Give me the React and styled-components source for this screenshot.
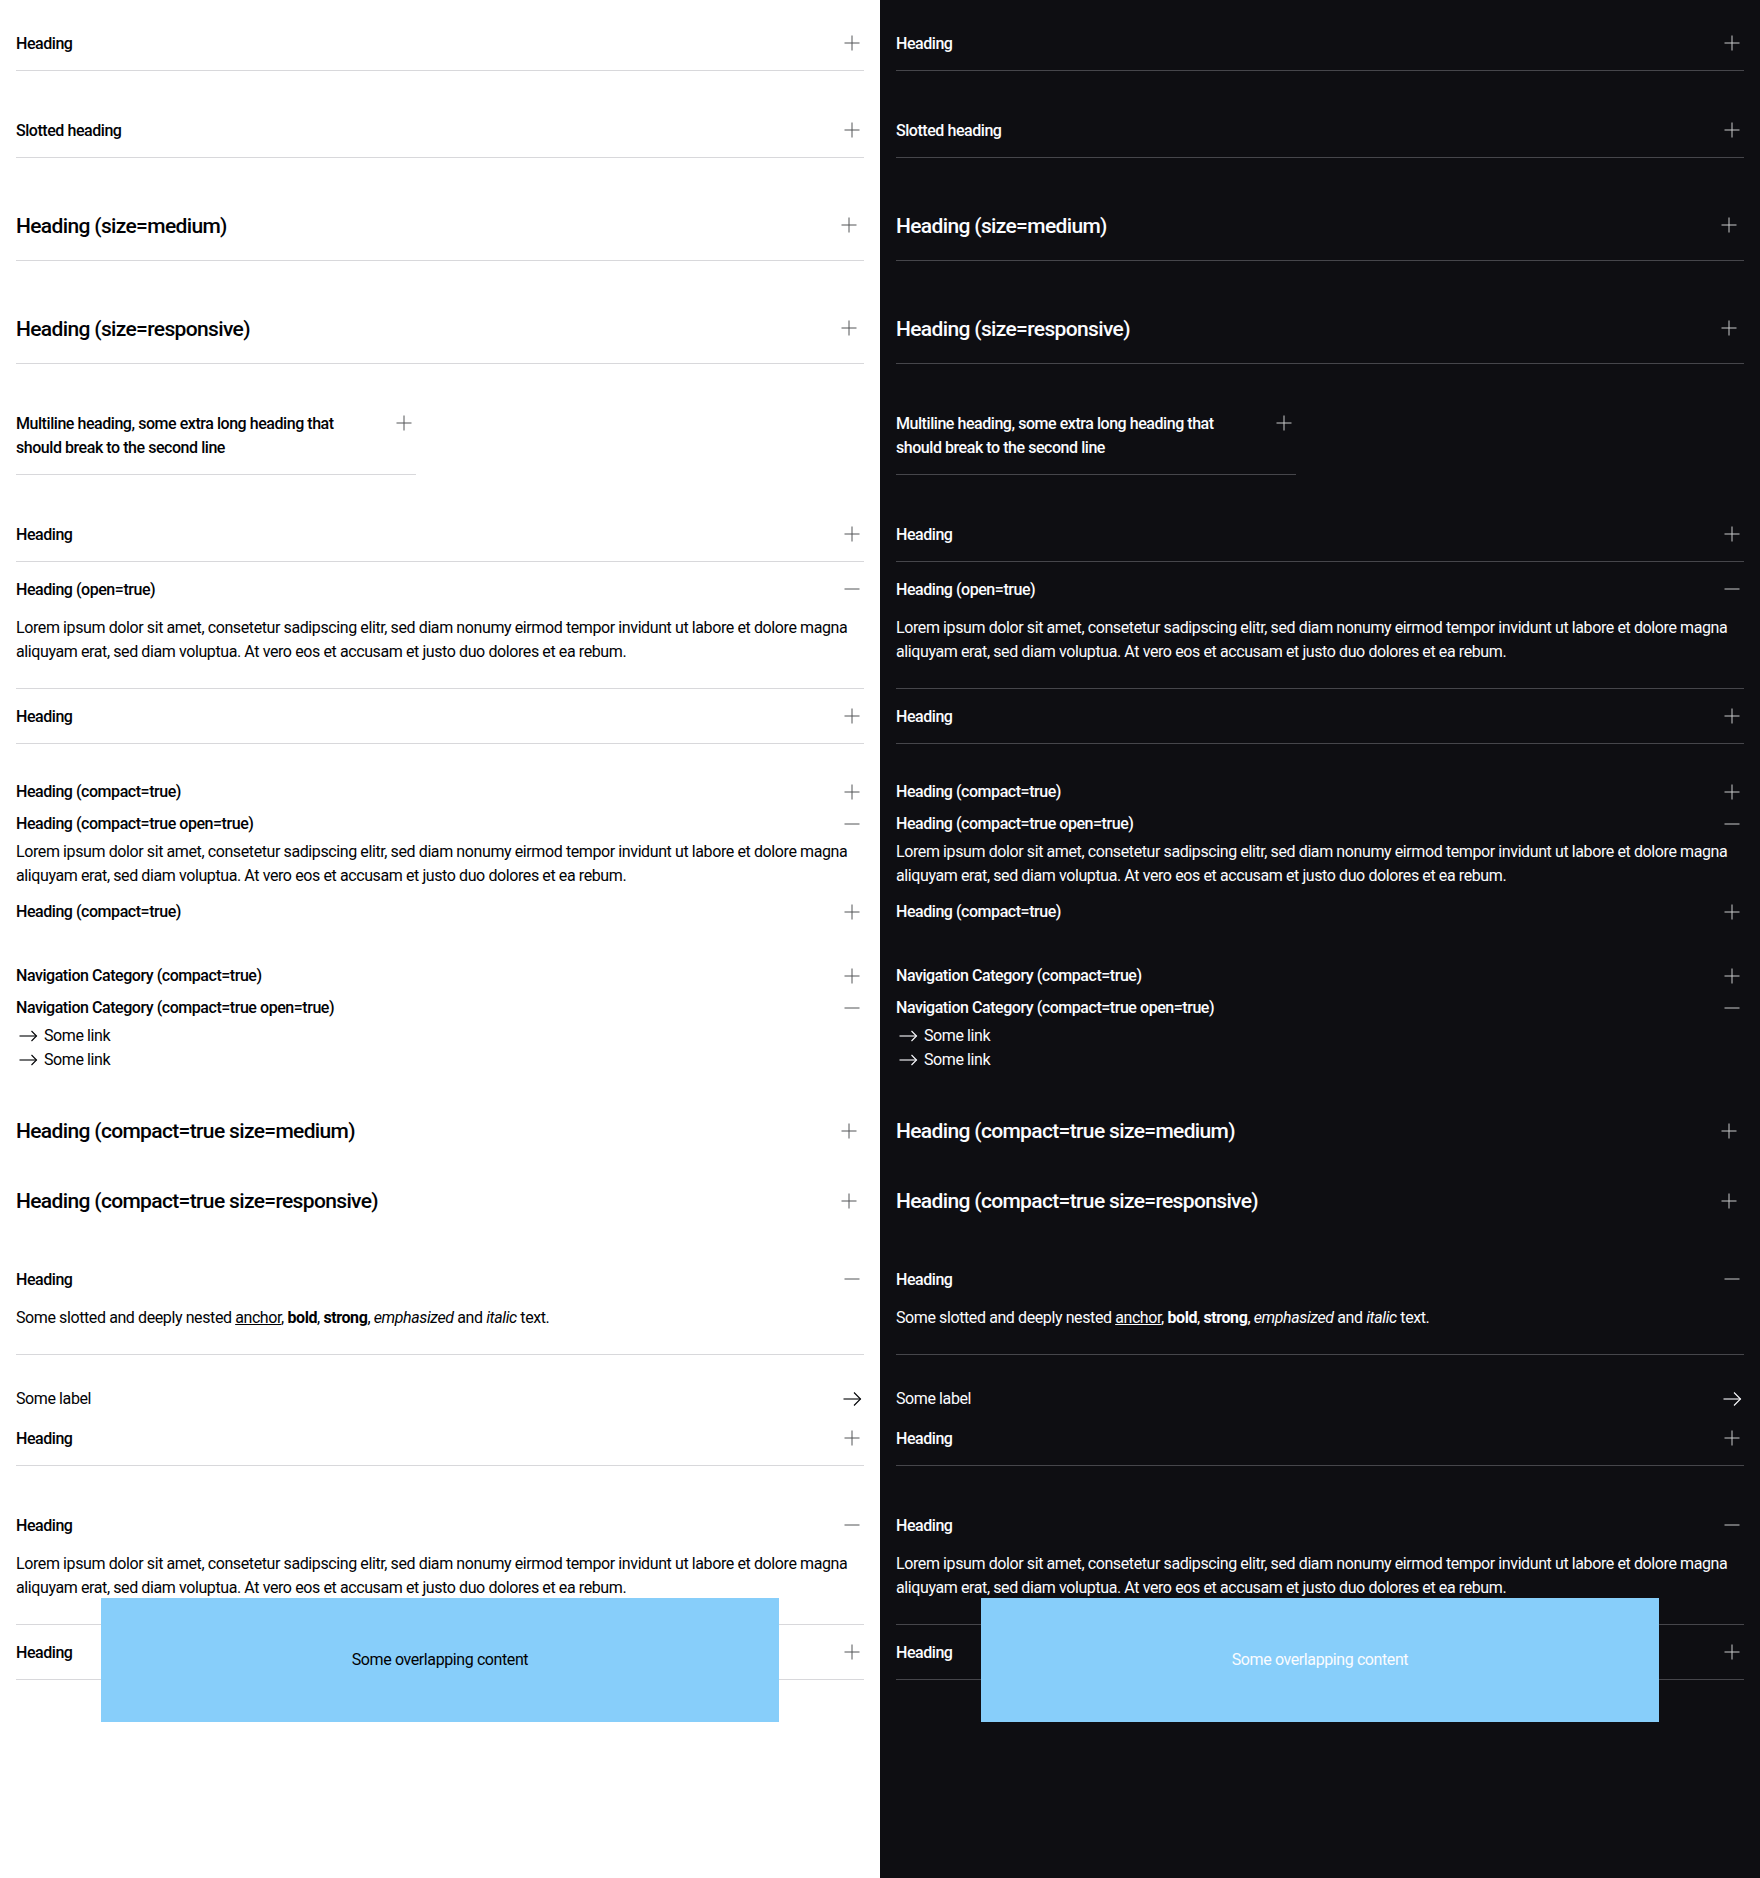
import React from "react";
import styled, { createGlobalStyle, ThemeProvider } from "styled-components";

const light = {
  bg: "#ffffff",
  text: "#010205",
  divider: "#d8d8db",
  icon: "#535457",
  overlayText: "#010205",
};
const dark = {
  bg: "#0e0e12",
  text: "#fbfcff",
  divider: "#46464b",
  icon: "#c9cacb",
  overlayText: "#fbfcff",
};

const Global = createGlobalStyle`
  html, body { margin: 0; padding: 0; }
  body { font-family: Roboto, "Liberation Sans", Arial, sans-serif; -webkit-font-smoothing: antialiased; }
  * { box-sizing: border-box; }
`;

const Page = styled.div`
  display: grid;
  grid-template-columns: 1fr 1fr;
  min-height: 100vh;
`;

const Panel = styled.div`
  background: ${(p) => p.theme.bg};
  color: ${(p) => p.theme.text};
  padding: 16px;
  display: flex;
  flex-direction: column;
  gap: 32px;
`;

const Group = styled.div`
  position: relative;
  display: flex;
  flex-direction: column;
`;

const Item = styled.div`
  max-width: ${(p) => p.$maxWidth || "none"};
  border-bottom: ${(p) => (p.$compact ? "none" : `1px solid ${p.theme.divider}`)};
`;

const Header = styled.div`
  display: flex;
  justify-content: space-between;
  align-items: flex-start;
  gap: 24px;
  padding: ${(p) => (p.$compact ? "4px 0 4px" : p.$size === "medium" ? "21px 0 19px" : "16px 0 14px")};
`;

const Title = styled.span`
  font-size: ${(p) => (p.$size === "medium" ? 21 : 16)}px;
  line-height: ${(p) => (p.$size === "medium" ? 30 : 24)}px;
  font-weight: 500;
  letter-spacing: ${(p) => (p.$size === "medium" ? "-0.65px" : "-0.45px")};
`;

const IconBox = styled.span`
  flex: none;
  display: flex;
  align-items: center;
  justify-content: center;
  width: ${(p) => p.$box}px;
  height: ${(p) => p.$box}px;
  margin-top: ${(p) => (p.$lift ? "-1px" : "0")};
  color: ${(p) => (p.$strong ? p.theme.text : p.theme.icon)};
`;

const Content = styled.div`
  padding: 0 0 ${(p) => (p.$compact ? 8 : 24)}px;
  font-size: 16px;
  line-height: 24px;
  letter-spacing: -0.4px;

  b, strong { font-weight: 700; }
`;

const InlineAnchor = styled.a`
  color: inherit;
  text-decoration: underline;
`;

const LinkList = styled.div`
  display: flex;
  flex-direction: column;
`;

const LinkRow = styled.a`
  display: flex;
  align-items: center;
  gap: 4px;
  color: inherit;
  text-decoration: none;
  font-size: 16px;
  line-height: 24px;
  letter-spacing: -0.4px;
`;

const LabelRow = styled.a`
  display: flex;
  justify-content: space-between;
  align-items: center;
  color: inherit;
  text-decoration: none;
  font-size: 16px;
  line-height: 24px;
  letter-spacing: -0.4px;
`;

const Overlay = styled.div`
  position: absolute;
  top: 100px;
  left: 10%;
  width: 80%;
  height: 124px;
  background: #87cefa;
  color: ${(p) => p.theme.overlayText};
  display: flex;
  align-items: center;
  justify-content: center;
  font-size: 16px;
  line-height: 24px;
  letter-spacing: -0.4px;
`;

const Plus = ({ open }) => (
  <svg width="24" height="24" viewBox="0 0 24 24" fill="none" stroke="currentColor" strokeWidth="1">
    <path d="M4.5 12h15" />
    {!open && <path d="M12 4.5v15" />}
  </svg>
);

const Arrow = ({ tall }) => (
  <svg width="24" height="24" viewBox="0 0 24 24" fill="none" stroke="currentColor" strokeWidth="1.1">
    <path d="M3.5 12h17" />
    {tall ? <path d="M14 5.5l6.5 6.5-6.5 6.5" /> : <path d="M15.5 7l5 5-5 5" />}
  </svg>
);

const Accordion = ({ heading, size = "small", compact, open, maxWidth, children }) => (
  <Item $compact={compact} $maxWidth={maxWidth}>
    <Header $compact={compact} $size={size}>
      <Title $size={size}>{heading}</Title>
      <IconBox $box={size === "medium" ? 30 : 24} $lift={!compact}>
        <Plus open={open} />
      </IconBox>
    </Header>
    {open && <Content $compact={compact}>{children}</Content>}
  </Item>
);

const LOREM =
  "Lorem ipsum dolor sit amet, consetetur sadipscing elitr, sed diam nonumy eirmod tempor invidunt ut labore et dolore magna aliquyam erat, sed diam voluptua. At vero eos et accusam et justo duo dolores et ea rebum.";

const Showcase = () => (
  <Panel>
    <Group>
      <Accordion heading="Heading" />
    </Group>
    <Group>
      <Accordion heading="Slotted heading" />
    </Group>
    <Group>
      <Accordion heading="Heading (size=medium)" size="medium" />
    </Group>
    <Group>
      <Accordion heading="Heading (size=responsive)" size="medium" />
    </Group>
    <Group>
      <Accordion
        heading="Multiline heading, some extra long heading that should break to the second line"
        maxWidth="400px"
      />
    </Group>
    <Group>
      <Accordion heading="Heading" />
      <Accordion heading="Heading (open=true)" open>
        {LOREM}
      </Accordion>
      <Accordion heading="Heading" />
    </Group>
    <Group>
      <Accordion heading="Heading (compact=true)" compact />
      <Accordion heading="Heading (compact=true open=true)" compact open>
        {LOREM}
      </Accordion>
      <Accordion heading="Heading (compact=true)" compact />
    </Group>
    <Group>
      <Accordion heading="Navigation Category (compact=true)" compact />
      <Accordion heading="Navigation Category (compact=true open=true)" compact open>
        <LinkList>
          <LinkRow href="#">
            <IconBox $box={24} $strong>
              <Arrow />
            </IconBox>
            Some link
          </LinkRow>
          <LinkRow href="#">
            <IconBox $box={24} $strong>
              <Arrow />
            </IconBox>
            Some link
          </LinkRow>
        </LinkList>
      </Accordion>
    </Group>
    <Group>
      <Accordion heading="Heading (compact=true size=medium)" size="medium" compact />
    </Group>
    <Group>
      <Accordion heading="Heading (compact=true size=responsive)" size="medium" compact />
    </Group>
    <Group>
      <Accordion heading="Heading" open>
        Some slotted and deeply nested <InlineAnchor href="#">anchor</InlineAnchor>, <b>bold</b>,{" "}
        <strong>strong</strong>, <em>emphasized</em> and <i>italic</i> text.
      </Accordion>
    </Group>
    <Group>
      <LabelRow href="#">
        Some label
        <IconBox $box={24} $strong>
          <Arrow tall />
        </IconBox>
      </LabelRow>
      <Accordion heading="Heading" />
    </Group>
    <Group>
      <Accordion heading="Heading" open>
        {LOREM}
      </Accordion>
      <Accordion heading="Heading" />
      <Overlay>Some overlapping content</Overlay>
    </Group>
  </Panel>
);

export default function App() {
  return (
    <>
      <Global />
      <Page>
        <ThemeProvider theme={light}>
          <Showcase />
        </ThemeProvider>
        <ThemeProvider theme={dark}>
          <Showcase />
        </ThemeProvider>
      </Page>
    </>
  );
}
